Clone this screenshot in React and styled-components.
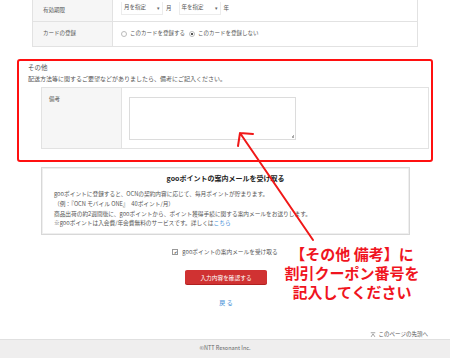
import React from 'react';
import styled, { createGlobalStyle } from 'styled-components';

const GlobalStyle = createGlobalStyle`
  html, body {
    margin: 0;
    padding: 0;
    background: #fff;
  }
  body {
    width: 450px;
    height: 358px;
    overflow: hidden;
    font-family: "Noto Sans CJK JP", "Noto Sans", sans-serif;
    color: #444;
  }
`;

const App = () => {
  return (
    <Page>
      <GlobalStyle />
      <FormTable>
        <Row height="21px">
          <Label>有効期限</Label>
          <Cell>
            <Select>月を指定<Caret>▾</Caret></Select>
            <Unit>月</Unit>
            <Select>年を指定<Caret>▾</Caret></Select>
            <Unit>年</Unit>
          </Cell>
        </Row>
        <Row height="24px" last>
          <Label>カードの登録</Label>
          <Cell>
            <Radio />
            <Choice>このカードを登録する</Choice>
            <Radio checked />
            <Choice>このカードを登録しない</Choice>
          </Cell>
        </Row>
      </FormTable>

      <Highlight>
        <SectionTitle>その他</SectionTitle>
        <Note>配送方法等に関するご要望などがありましたら、備考にご記入ください。</Note>
        <InnerTable>
          <Row height="60px" last>
            <Label top>備考</Label>
            <Cell top>
              <TextArea />
            </Cell>
          </Row>
        </InnerTable>
      </Highlight>

      <GooBox>
        <GooTitle>gooポイントの案内メールを受け取る</GooTitle>
        <GooText>
          gooポイントに登録すると、OCNの契約内容に応じて、毎月ポイントが貯まります。<br />
          （例：『OCN モバイル ONE』　40ポイント/月）<br />
          商品出荷の約2週間後に、gooポイントから、ポイント獲得手続に関する案内メールをお送りします。<br />
          ※gooポイントは入会費/年会費無料のサービスです。詳しくは<Link>こちら</Link>
        </GooText>
      </GooBox>

      <CheckLine>
        <CheckBox>✔</CheckBox>
        gooポイントの案内メールを受け取る
      </CheckLine>

      <Actions>
        <SubmitButton>入力内容を確認する</SubmitButton>
        <BackLink>戻 る</BackLink>
      </Actions>

      <PageTop>
        <TopIcon viewBox="0 0 8 8">
          <path d="M1 1h6M4 2.5L1.5 6.5M4 2.5L6.5 6.5" stroke="#777" strokeWidth="0.9" fill="none" />
        </TopIcon>
        このページの先頭へ
      </PageTop>

      <Footer>©NTT Resonant Inc.</Footer>

      <Annotation>
        <Arrow viewBox="0 0 450 358">
          <path d="M313 240 L240 133 M240 133 L253 134 M240 133 L238 146" stroke="#f01818" strokeWidth="2" fill="none" strokeLinecap="round" />
        </Arrow>
        <Callout>
          【その他 備考】に<br />
          割引クーポン番号を<br />
          記入してください
        </Callout>
      </Annotation>
    </Page>
  );
};

const Page = styled.div`
  position: relative;
  width: 450px;
  height: 358px;
  display: flex;
  flex-direction: column;
  font-size: 6px;
  line-height: 1.3;
`;

const FormTable = styled.div`
  margin: 0 32px;
  border: 1px solid #e2e2e2;
  border-top: none;
  display: flex;
  flex-direction: column;
`;

const InnerTable = styled(FormTable)`
  margin: 4px 0 0 13px;
  width: 386px;
  border-top: 1px solid #e2e2e2;
`;

const Row = styled.div`
  display: flex;
  height: ${props => props.height};
  border-bottom: ${props => (props.last ? 'none' : '1px solid #e2e2e2')};
`;

const Label = styled.div`
  width: 80px;
  flex-shrink: 0;
  background: #f6f6f6;
  border-right: 1px solid #e2e2e2;
  padding: ${props => (props.top ? '8px 0 0 7px' : '0 0 0 10px')};
  display: flex;
  align-items: ${props => (props.top ? 'flex-start' : 'center')};
  box-sizing: border-box;
  color: #555;
  font-size: 5.5px;
`;

const Cell = styled.div`
  flex: 1;
  display: flex;
  align-items: ${props => (props.top ? 'flex-start' : 'center')};
  padding: ${props => (props.top ? '8px 0 0 7px' : '0 0 0 8px')};
  gap: 3px;
  color: #555;
  font-size: 5.5px;
`;

const Select = styled.div`
  width: 36px;
  height: 12px;
  margin-top: -4px;
  border: 1px solid #ececec;
  border-top: none;
  padding: 0 2px;
  display: flex;
  align-items: center;
  justify-content: space-between;
  background: #fff;
`;

const Caret = styled.span`
  font-size: 5px;
  color: #666;
`;

const Unit = styled.span`
  margin-top: -4px;
  margin-right: 4px;
`;

const Radio = styled.span`
  width: 4px;
  height: 4px;
  border-radius: 50%;
  border: 1px solid #bbb;
  background: ${props => (props.checked ? 'radial-gradient(circle, #555 40%, #fff 50%)' : '#fff')};
`;

const Choice = styled.span`
  margin-right: 1px;
`;

const Highlight = styled.section`
  margin: 12px 17px 0;
  height: 103px;
  box-sizing: border-box;
  border: 2px solid #ff1010;
  border-radius: 3px;
  padding: 2px 0 0 9px;
  display: flex;
  flex-direction: column;
`;

const SectionTitle = styled.div`
  font-size: 6.5px;
  color: #555;
`;

const Note = styled.div`
  margin-top: 4px;
  font-size: 6px;
  color: #555;
`;

const TextArea = styled.div`
  width: 165px;
  height: 41px;
  border: 1px solid #dcdcdc;
  background: #fff;
  position: relative;
  margin-top: 1px;

  &::after {
    content: '';
    position: absolute;
    right: 1px;
    bottom: 1px;
    width: 3px;
    height: 3px;
    background: linear-gradient(135deg, transparent 50%, #aaa 50%);
  }
`;

const GooBox = styled.div`
  margin: 5px 40px 0 41px;
  height: 68px;
  box-sizing: border-box;
  border: 1px solid #d8d8d8;
  box-shadow: inset 0 0 0 1px #efefef;
  padding: 6px 0 0 12px;
`;

const GooTitle = styled.div`
  text-align: center;
  padding-right: 12px;
  font-weight: bold;
  font-size: 7px;
  color: #222;
`;

const GooText = styled.div`
  margin-top: 6px;
  font-size: 5.7px;
  line-height: 9.7px;
  color: #555;
`;

const Link = styled.span`
  color: #3b8bd6;
`;

const CheckLine = styled.div`
  margin-top: 13px;
  display: flex;
  justify-content: center;
  align-items: center;
  gap: 4px;
  font-size: 5.7px;
  color: #555;
`;

const CheckBox = styled.span`
  width: 4px;
  height: 4px;
  border: 1px solid #999;
  font-size: 4px;
  line-height: 4px;
  text-align: center;
  color: #333;
`;

const Actions = styled.div`
  margin-top: 15px;
  display: flex;
  flex-direction: column;
  align-items: center;
  padding-left: 2px;
`;

const SubmitButton = styled.div`
  width: 82px;
  height: 14px;
  background: #d03232;
  border-radius: 2px;
  color: #fff;
  font-size: 5.7px;
  display: flex;
  align-items: center;
  justify-content: center;
  box-shadow: 0 1px 0 #b02020;
`;

const BackLink = styled.div`
  margin-top: 15px;
  color: #3b8bd6;
  font-size: 6px;
`;

const PageTop = styled.div`
  margin: 24px 22px 0 0;
  align-self: flex-end;
  display: flex;
  align-items: center;
  gap: 3px;
  font-size: 5.5px;
  color: #555;
`;

const TopIcon = styled.svg`
  width: 6px;
  height: 6px;
`;

const Footer = styled.footer`
  margin-top: auto;
  height: 18px;
  background: #efeeee;
  border-top: 1px solid #e0e0e0;
  display: flex;
  align-items: center;
  justify-content: center;
  font-size: 5.5px;
  color: #666;
`;

const Annotation = styled.div`
  position: absolute;
  inset: 0;
  pointer-events: none;
`;

const Arrow = styled.svg`
  position: absolute;
  left: 0;
  top: 0;
  width: 450px;
  height: 358px;
`;

const Callout = styled.div`
  position: absolute;
  left: 282px;
  top: 244px;
  width: 140px;
  text-align: center;
  color: #f0141e;
  font-weight: bold;
  font-size: 15px;
  line-height: 19px;
`;

export default App;
